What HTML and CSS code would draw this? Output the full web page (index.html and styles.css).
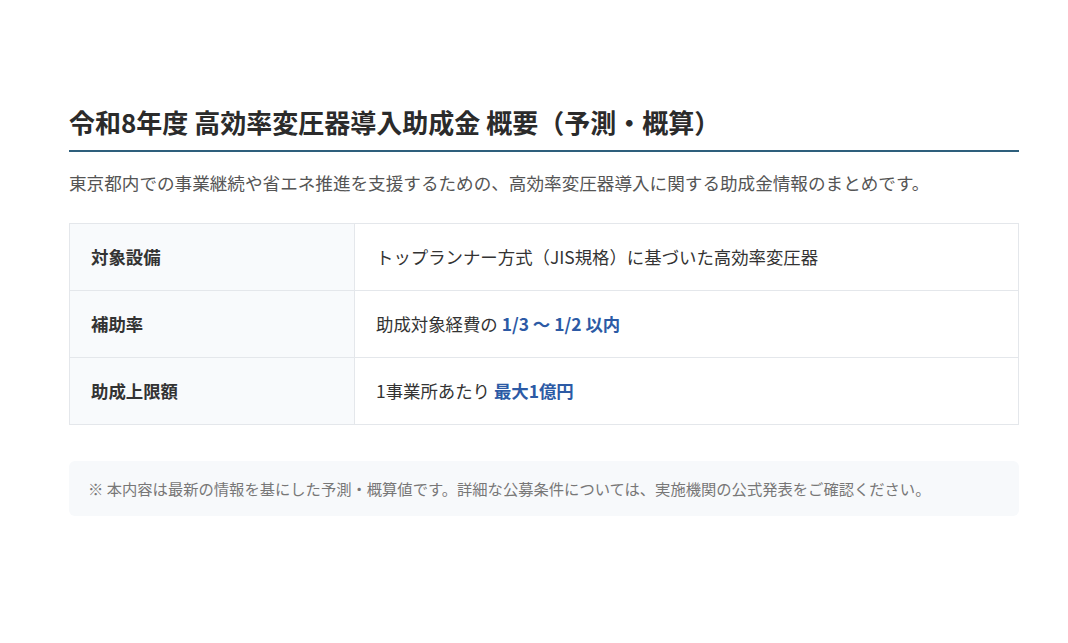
FILE: index.html
```html
<!DOCTYPE html>
<html lang="ja">
<head>
<meta charset="utf-8">
<title>令和8年度 高効率変圧器導入助成金 概要</title>
<link rel="stylesheet" href="styles.css">
</head>
<body>
<main class="page">
  <section class="summary">
    <h1 class="title">令和8年度 高効率変圧器導入助成金 概要（予測・概算）</h1>
    <p class="lead">東京都内での事業継続や省エネ推進を支援するための、高効率変圧器導入に関する助成金情報のまとめです。</p>
    <table class="info">
      <tr>
        <th class="label">対象設備</th>
        <td class="value">トップランナー方式（JIS規格）に基づいた高効率変圧器</td>
      </tr>
      <tr>
        <th class="label">補助率</th>
        <td class="value">助成対象経費の <strong class="em">1/3 ～ 1/2 以内</strong></td>
      </tr>
      <tr>
        <th class="label">助成上限額</th>
        <td class="value">1事業所あたり <strong class="em">最大1億円</strong></td>
      </tr>
    </table>
    <p class="note">※ 本内容は最新の情報を基にした予測・概算値です。詳細な公募条件については、実施機関の公式発表をご確認ください。</p>
  </section>
</main>
</body>
</html>
```
FILE: styles.css
```css
html, body {
  margin: 0;
  padding: 0;
  background: #ffffff;
}
body {
  font-family: "Noto Sans CJK JP", "Noto Sans", sans-serif;
  color: #333;
}
.page {
  padding: 104px 49px 0 69px;
}
.summary {
  width: 950px;
}
.title {
  margin: 0;
  font-size: 26px;
  line-height: 36px;
  font-weight: 700;
  color: #2b2b2b;
  padding-bottom: 10px;
  border-bottom: 2px solid #2e5f7c;
}
.lead {
  margin: 16px 0 0;
  font-size: 17.6px;
  line-height: 30px;
  color: #555;
}
.info {
  margin-top: 25px;
  width: 100%;
  border-collapse: collapse;
  border: 1px solid #e4e7eb;
}
.info th, .info td {
  border: 1px solid #e4e7eb;
  height: 66px;
  padding: 0;
  vertical-align: middle;
  text-align: left;
  font-size: 17.4px;
  line-height: 26px;
}
.label {
  width: 263px;
  padding-left: 21px !important;
  background: #f8fafc;
  font-weight: 700;
  color: #333;
}
.value {
  padding-left: 21px !important;
  color: #333;
  font-weight: 400;
}
.em {
  color: #2c5aa5;
  font-weight: 700;
}
.note {
  margin: 36px 0 0;
  background: #f7f9fb;
  border-radius: 6px;
  padding: 14px 19px;
  font-size: 15.3px;
  line-height: 27px;
  color: #777;
}
```
